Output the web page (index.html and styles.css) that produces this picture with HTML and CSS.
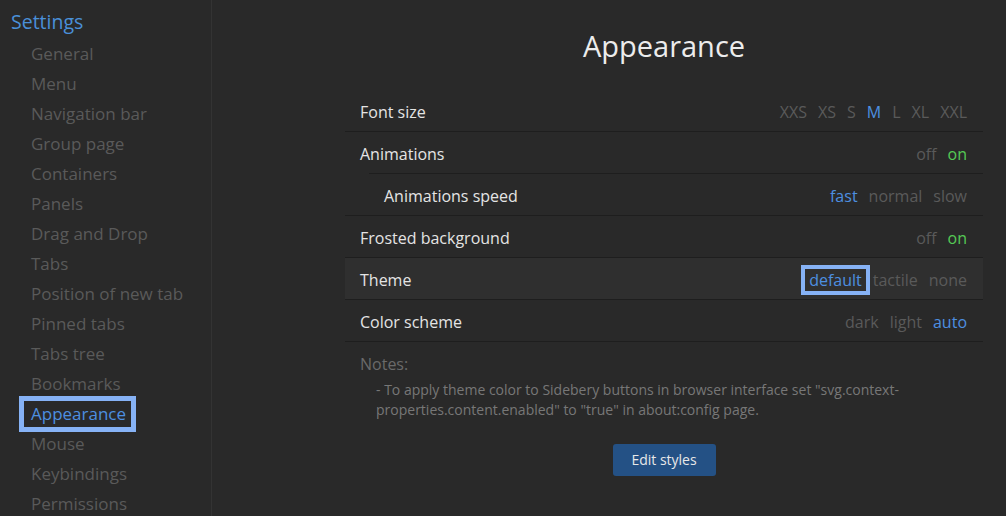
FILE: index.html
```html
<!DOCTYPE html>
<html>
<head>
    <title>Settings - Appearance</title>
    <link rel="stylesheet" href="styles.css">
</head>
<body>
<div class="layout">
    <div class="sidebar">
        <div class="sidebar-title">Settings</div>
        <ul class="nav">
            <li>General</li>
            <li>Menu</li>
            <li>Navigation bar</li>
            <li>Group page</li>
            <li>Containers</li>
            <li>Panels</li>
            <li>Drag and Drop</li>
            <li>Tabs</li>
            <li>Position of new tab</li>
            <li>Pinned tabs</li>
            <li>Tabs tree</li>
            <li>Bookmarks</li>
            <li class="active">Appearance</li>
            <li>Mouse</li>
            <li>Keybindings</li>
            <li>Permissions</li>
        </ul>
    </div>

    <div class="main">
        <h1 class="section-title">Appearance</h1>

        <div class="opt">
            <span class="opt-label">Font size</span>
            <span class="opt-values">
                <span>XXS</span><span>XS</span><span>S</span><span class="sel">M</span><span>L</span><span>XL</span><span>XXL</span>
            </span>
        </div>

        <div class="opt has-sub">
            <span class="opt-label">Animations</span>
            <span class="opt-values">
                <span>off</span><span class="on">on</span>
            </span>
        </div>

        <div class="opt nested">
            <span class="opt-label">Animations speed</span>
            <span class="opt-values">
                <span class="sel">fast</span><span>normal</span><span>slow</span>
            </span>
        </div>

        <div class="opt">
            <span class="opt-label">Frosted background</span>
            <span class="opt-values">
                <span>off</span><span class="on">on</span>
            </span>
        </div>

        <div class="opt hover">
            <span class="opt-label">Theme</span>
            <span class="opt-values">
                <span class="sel focus">default</span><span>tactile</span><span>none</span>
            </span>
        </div>

        <div class="opt">
            <span class="opt-label">Color scheme</span>
            <span class="opt-values">
                <span>dark</span><span>light</span><span class="sel">auto</span>
            </span>
        </div>

        <div class="notes">
            <div class="notes-title">Notes:</div>
            <div class="notes-text">- To apply theme color to Sidebery buttons in browser interface set "svg.context-properties.content.enabled" to "true" in about:config page.</div>
        </div>

        <div class="actions">
            <a class="button">Edit styles</a>
        </div>
    </div>
</div>
</body>
</html>
```

FILE: styles.css
```css
html, body {
    margin: 0;
    height: 100%;
}

body {
    font-family: "Open Sans", "Noto Sans", sans-serif;
    background-color: #292929;
    color: #e4e4e4;
    overflow: hidden;
}

.layout {
    display: flex;
    height: 100%;
}

.sidebar {
    width: 211px;
    flex-shrink: 0;
    border-right: 1px solid #333333;
    overflow: hidden;
}

.sidebar-title {
    font-size: 19.5px;
    line-height: 24px;
    color: #4a90d9;
    padding: 10px 0 0 11px;
}

.nav {
    list-style: none;
    margin: 7px 0 0 0;
    padding: 0 0 0 24px;
}
.nav li {
    width: fit-content;
    font-size: 17px;
    line-height: 26px;
    padding: 0 5px 0 7px;
    margin-bottom: 4px;
    color: #5a5a5a;
    white-space: nowrap;
}
.nav li.active {
    color: #4d8fe0;
    outline: 5px solid #86b2f5;
}

.main {
    width: 638px;
    margin-left: 133px;
    padding-top: 28px;
}

.section-title {
    margin: 0 0 26px 0;
    font-size: 29px;
    line-height: 36px;
    font-weight: normal;
    text-align: center;
    color: #ececec;
}

.opt {
    display: flex;
    align-items: center;
    justify-content: space-between;
    box-sizing: border-box;
    height: 42px;
    padding: 2px 12px 0 15px;
    border-bottom: 1px solid #1e1e1e;
    font-size: 16px;
}
.opt.has-sub {
    border-bottom: none;
    background: linear-gradient(#1e1e1e, #1e1e1e) no-repeat right bottom / calc(100% - 24px) 1px;
}
.opt.nested .opt-label {
    padding-left: 24px;
}
.opt.hover {
    background-color: #2f2f2f;
}

.opt-label {
    color: #e4e4e4;
}

.opt-values {
    display: flex;
    gap: 3px;
}
.opt-values span {
    line-height: 22px;
    padding: 0 4px;
    color: #5a5a5a;
}
.opt-values span.sel { color: #4d8fe0; }
.opt-values span.on { color: #55c955; }
.opt-values span.focus {
    outline: 4px solid #86b2f5;
}

.notes {
    padding: 11px 12px 0 15px;
}
.notes-title {
    font-size: 16px;
    line-height: 22px;
    color: #6a6a6a;
}
.notes-text {
    margin-top: 5px;
    padding-left: 16px;
    font-size: 14px;
    line-height: 20px;
    color: #777777;
}

.actions {
    display: flex;
    justify-content: center;
    margin-top: 24px;
}

.button {
    display: inline-block;
    width: 103px;
    height: 32px;
    line-height: 32px;
    text-align: center;
    font-size: 14px;
    color: #e8e8e8;
    background-color: #245185;
    border-radius: 3px;
    cursor: pointer;
}
```
